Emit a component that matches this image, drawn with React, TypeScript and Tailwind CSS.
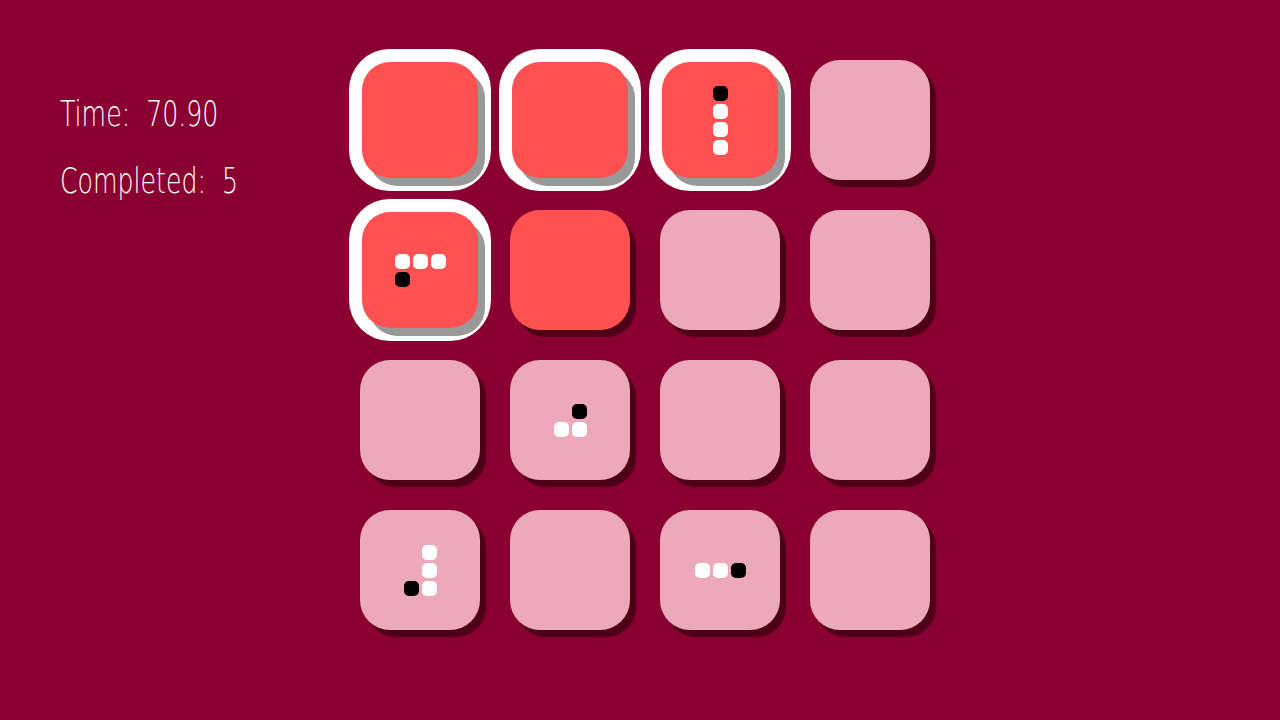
import React from "react";

type Kind = "sel" | "red" | "pink";

interface Tile {
  kind: Kind;
  // rows of the little piece drawn in the tile: W = white, B = black, . = empty
  piece?: string[];
}

const tiles: Tile[] = [
  { kind: "sel" },
  { kind: "sel" },
  { kind: "sel", piece: ["B", "W", "W", "W"] },
  { kind: "pink" },
  { kind: "sel", piece: ["WWW", "B.."] },
  { kind: "red" },
  { kind: "pink" },
  { kind: "pink" },
  { kind: "pink" },
  { kind: "pink", piece: [".B", "WW"] },
  { kind: "pink" },
  { kind: "pink" },
  { kind: "pink", piece: [".W", ".W", "BW"] },
  { kind: "pink" },
  { kind: "pink", piece: ["WWB"] },
  { kind: "pink" },
];

function Piece({ rows }: { rows: string[] }) {
  return (
    <div className="flex flex-col gap-[3px]">
      {rows.map((row, r) => (
        <div key={r} className="flex gap-[3px]">
          {row.split("").map((c, i) => (
            <div
              key={i}
              className={
                c === "W"
                  ? "w-[15px] h-[15px] rounded-[5px] bg-white"
                  : c === "B"
                  ? "w-[15px] h-[15px] rounded-[5px] bg-black"
                  : "w-[15px] h-[15px]"
              }
            />
          ))}
        </div>
      ))}
    </div>
  );
}

function TileCell({ tile }: { tile: Tile }) {
  if (tile.kind === "sel") {
    return (
      <div className="w-[120px] h-[120px] flex items-center justify-center">
        <div className="w-[116px] h-[116px] rounded-[28px] bg-[#ff5151] shadow-[7px_8px_0_0_#999999,0_0_0_13px_#ffffff] flex items-center justify-center">
          {tile.piece && <Piece rows={tile.piece} />}
        </div>
      </div>
    );
  }
  return (
    <div
      className={
        (tile.kind === "red" ? "bg-[#ff5151]" : "bg-[#eda9bc]") +
        " w-[120px] h-[120px] rounded-[30px] shadow-[6px_7px_1px_0_#4d0018] flex items-center justify-center"
      }
    >
      {tile.piece && <Piece rows={tile.piece} />}
    </div>
  );
}

export default function App() {
  return (
    <div className="w-[1280px] h-[720px] bg-[#8a0030] flex overflow-hidden">
      <div className="w-[360px] shrink-0 pl-[60px] pt-[81px] text-white">
        <div
          className="origin-left scale-x-[0.72] text-[35px] leading-[67px] font-extralight font-stretch-condensed whitespace-pre"
          style={{ fontFamily: '"DejaVu Sans", sans-serif' }}
        >
          <div>Time:  70.90</div>
          <div>Completed:  5</div>
        </div>
      </div>
      <div className="pt-[60px]">
        <div className="grid grid-cols-[repeat(4,120px)] gap-[30px]">
          {tiles.map((t, i) => (
            <TileCell key={i} tile={t} />
          ))}
        </div>
      </div>
    </div>
  );
}
